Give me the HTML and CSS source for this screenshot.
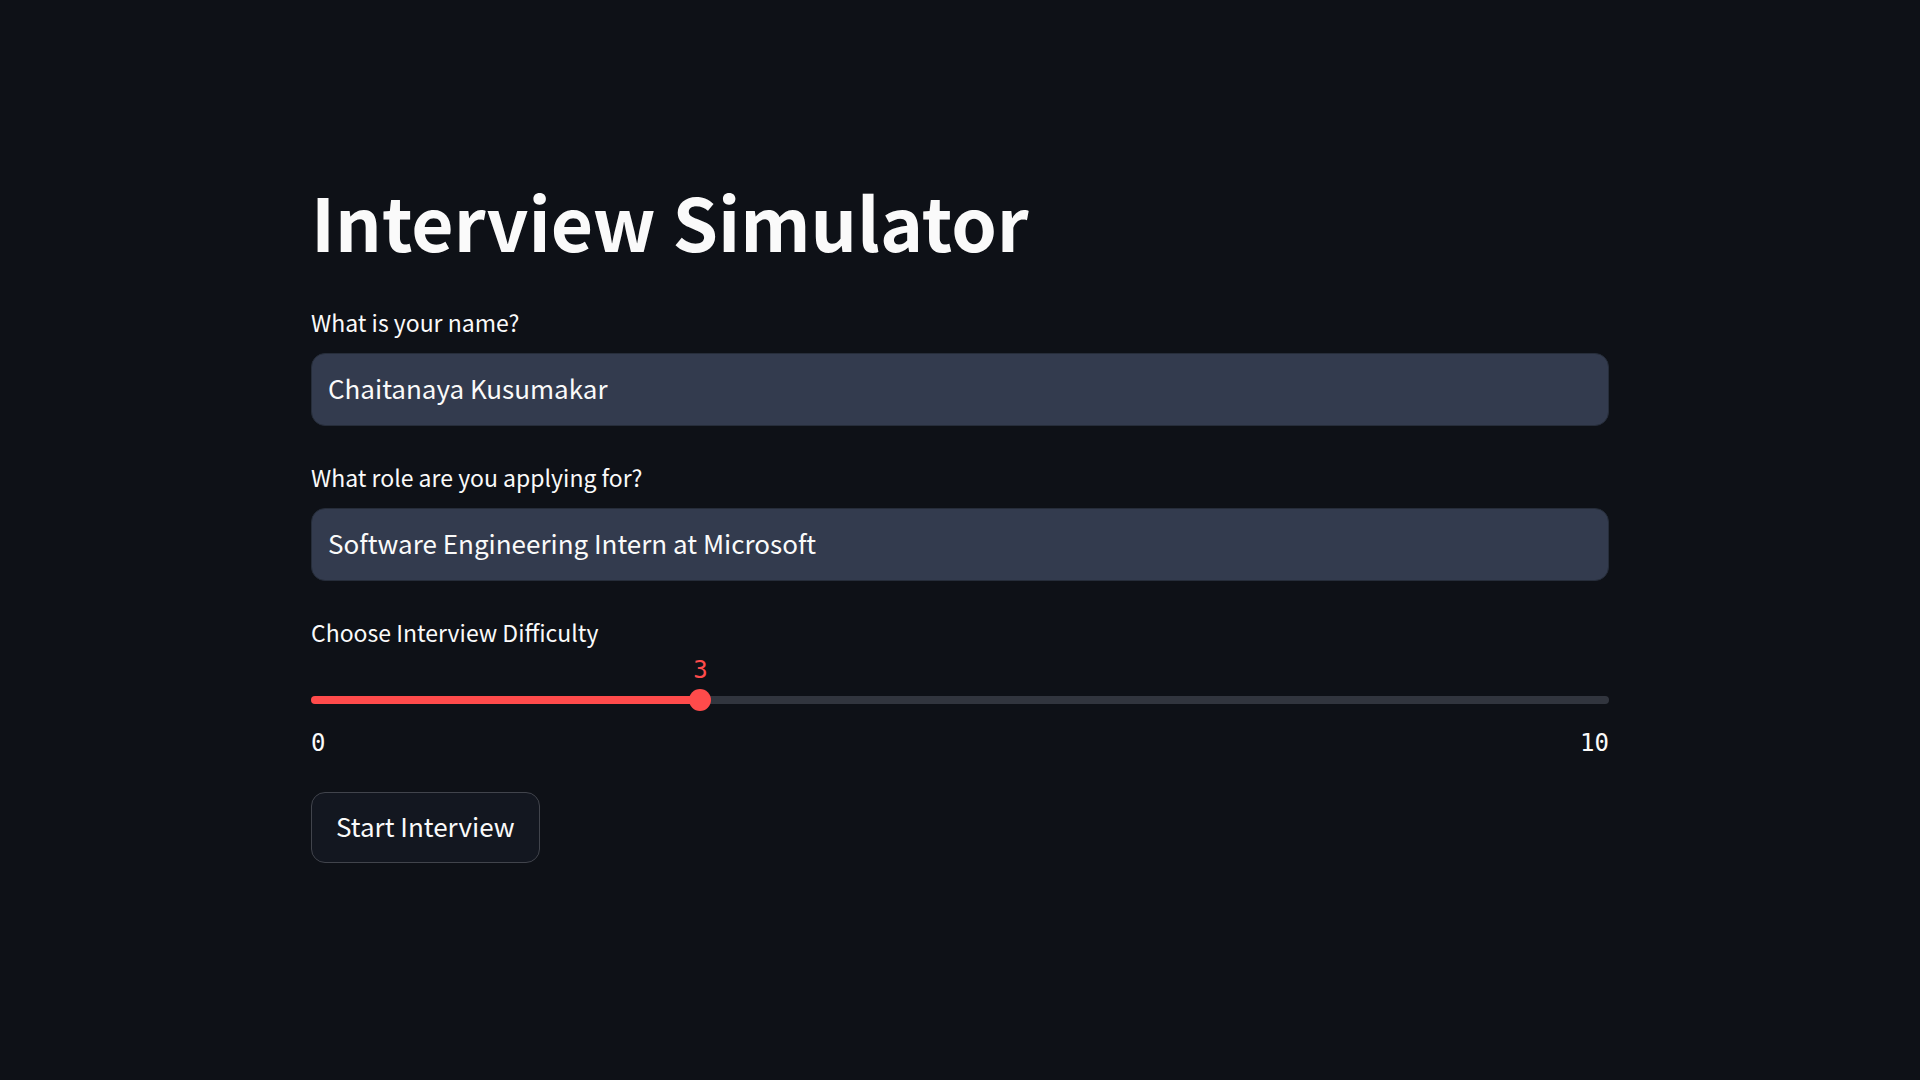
FILE: index.html
```html
<!DOCTYPE html>
<html lang="en">
<head>
<meta charset="utf-8">
<meta name="viewport" content="width=device-width, initial-scale=1">
<title>Interview Simulator</title>
<link rel="stylesheet" href="styles.css">
</head>
<body>
<main class="page">
  <h1 class="title">Interview Simulator</h1>
  <form class="form">
    <div class="field">
      <label class="label" for="name">What is your name?</label>
      <input class="text-input" id="name" type="text" value="Chaitanaya Kusumakar">
    </div>
    <div class="field">
      <label class="label" for="role">What role are you applying for?</label>
      <input class="text-input" id="role" type="text" value="Software Engineering Intern at Microsoft">
    </div>
    <div class="field slider-field">
      <label class="label" for="difficulty">Choose Interview Difficulty</label>
      <div class="slider" style="--value: 30%">
        <output class="slider-value" for="difficulty">3</output>
        <div class="slider-control">
          <div class="slider-rail"></div>
          <input class="slider-input" id="difficulty" type="range" min="0" max="10" value="3">
        </div>
      </div>
      <div class="slider-range"><span>0</span><span>10</span></div>
    </div>
    <button class="button" type="button">Start Interview</button>
  </form>
</main>
</body>
</html>
```

FILE: styles.css
```css
* { box-sizing: border-box; }

body {
  margin: 0;
  background: #0e1117;
  color: #fafafa;
  font-family: "Noto Sans CJK SC", "Noto Sans", sans-serif;
}

.page {
  max-width: 1362px;
  margin: 0 auto;
  padding: 172px 32px 96px;
}

.title {
  margin: 0 0 34px;
  font-size: 73px;
  line-height: 96px;
  font-weight: 700;
}

.form {
  display: flex;
  flex-direction: column;
  align-items: flex-start;
  gap: 31px;
}

.field {
  display: flex;
  flex-direction: column;
  gap: 11px;
  width: 100%;
}

.label {
  font-size: 23px;
  line-height: 40px;
}

.text-input {
  width: 100%;
  height: 73px;
  padding: 0 16px 5px;
  border: 1px solid #262d3a;
  border-radius: 14px;
  background: #333b4e;
  color: inherit;
  font: inherit;
  font-size: 26px;
}

.slider-field { gap: 0; }

.slider {
  position: relative;
  padding-top: 37px;
}

.slider-value {
  position: absolute;
  top: 2px;
  left: var(--value);
  transform: translateX(-50%);
  color: #ff4b4b;
  font-family: "DejaVu Sans Mono", monospace;
  font-size: 24px;
  line-height: 32px;
}

/* The rail and the range input share one grid cell */
.slider-control {
  display: grid;
  align-items: center;
}

.slider-rail,
.slider-input { grid-area: 1 / 1; }

.slider-rail {
  height: 8px;
  border-radius: 4px;
  background: linear-gradient(to right, #ff4b4b var(--value), #31353e var(--value));
}

/* Half a thumb wider on each side, so the thumb centre follows the rail */
.slider-input {
  width: auto;
  height: 22px;
  margin: 0 -11px;
  appearance: none;
  background: transparent;
}

.slider-input::-webkit-slider-thumb {
  appearance: none;
  width: 22px;
  height: 22px;
  border-radius: 50%;
  background: #ff4b4b;
}

.slider-range {
  display: flex;
  justify-content: space-between;
  margin-top: 14px;
  font-family: "DejaVu Sans Mono", monospace;
  font-size: 24px;
  line-height: 36px;
}

.button {
  height: 71px;
  padding: 0 24px 5px;
  border: 1px solid #41444c;
  border-radius: 14px;
  background: #131720;
  color: inherit;
  font: inherit;
  font-size: 26px;
}
```
